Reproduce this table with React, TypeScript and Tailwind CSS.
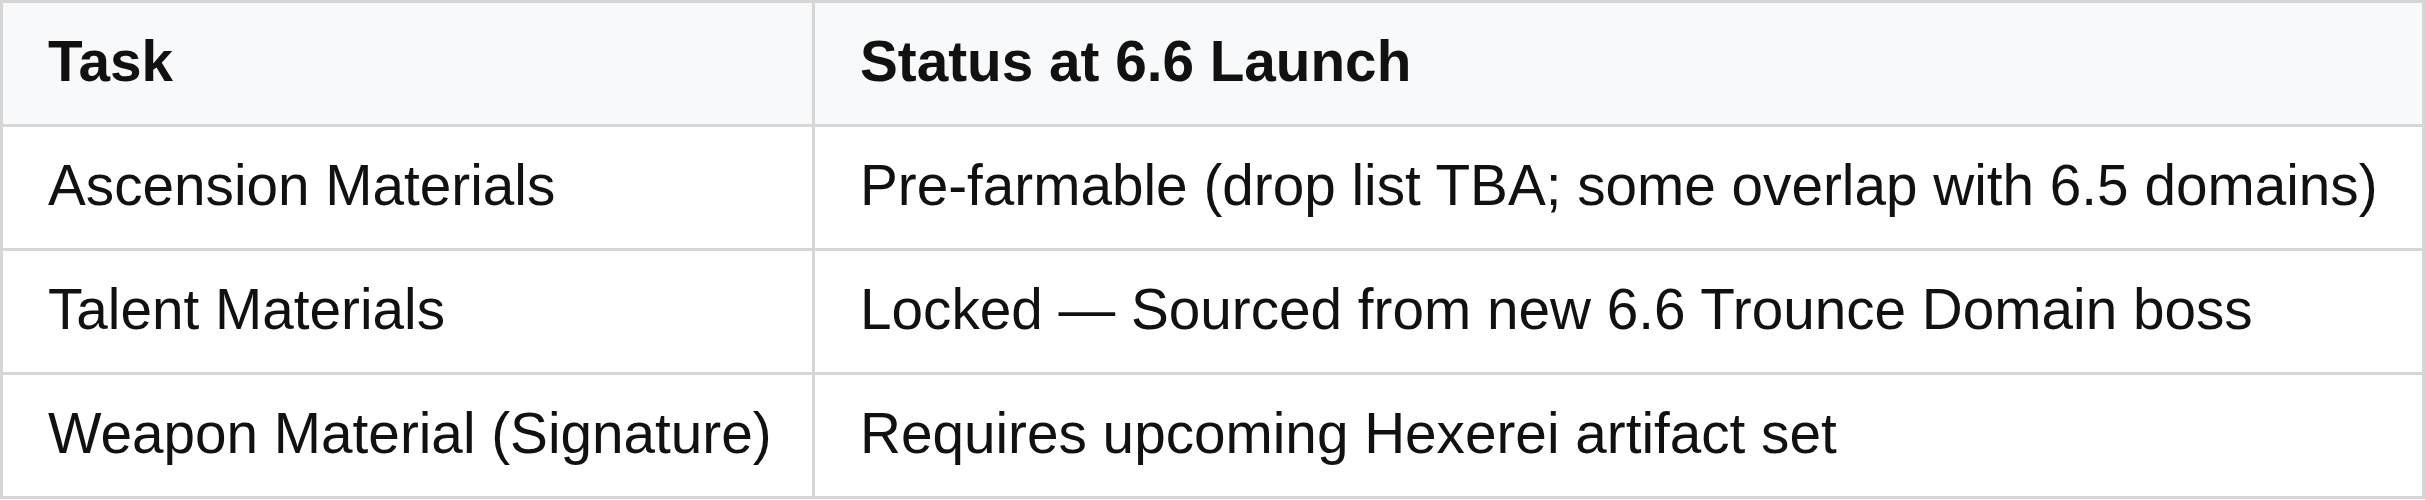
import React from "react";

const rows: [string, string][] = [
  ["Ascension Materials", "Pre-farmable (drop list TBA; some overlap with 6.5 domains)"],
  ["Talent Materials", "Locked — Sourced from new 6.6 Trounce Domain boss"],
  ["Weapon Material (Signature)", "Requires upcoming Hexerei artifact set"],
];

export default function App() {
  return (
    <div
      className="w-[2425px] bg-white"
      style={{ fontFamily: '"Liberation Sans", Arial, sans-serif' }}
    >
      <div className="flex flex-col border-[3px] border-[#d6d6d6] text-[56.7px] leading-[64px] text-[#111111]">
        <div className="flex h-[121px] bg-[#f8f9fa] font-bold">
          <div className="flex w-[812px] items-center border-r-[3px] border-[#d6d6d6] pb-[4px] pl-[45px]">
            Task
          </div>
          <div className="flex flex-1 items-center pb-[4px] pl-[45px]">
            Status at 6.6 Launch
          </div>
        </div>
        {rows.map(([a, b], i) => (
          <div
            key={i}
            className="flex h-[124px] border-t-[3px] border-[#d6d6d6] bg-white"
          >
            <div className="flex w-[812px] items-center border-r-[3px] border-[#d6d6d6] pb-[4px] pl-[45px] whitespace-nowrap">
              {a}
            </div>
            <div className="flex flex-1 items-center pb-[4px] pl-[45px] whitespace-nowrap">
              {b}
            </div>
          </div>
        ))}
      </div>
    </div>
  );
}
